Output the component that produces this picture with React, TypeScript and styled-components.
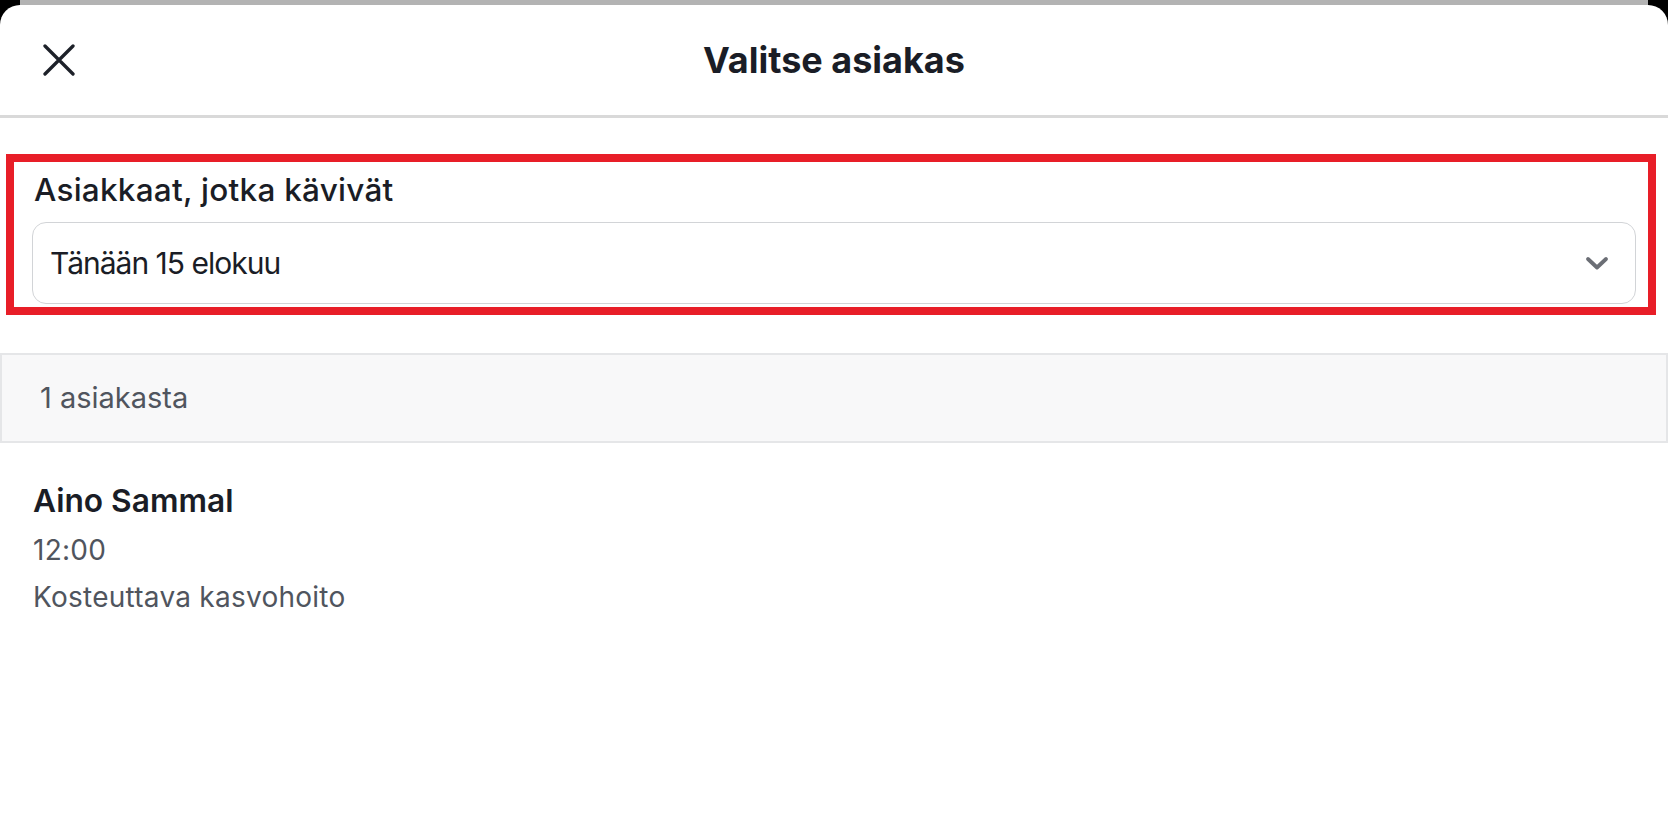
import React from "react";
import styled, { createGlobalStyle } from "styled-components";

const GlobalStyle = createGlobalStyle`
  html, body {
    margin: 0;
    padding: 0;
    background: #000;
  }
  body {
    font-family: Inter, "Noto Sans", "Liberation Sans", sans-serif;
    color: #1a1d26;
    -webkit-font-smoothing: antialiased;
  }
  * { box-sizing: border-box; }
`;

const Screen = styled.div`
  min-height: 823px;
  background: #000;
  display: flex;
  flex-direction: column;
`;

const UnderlyingPage = styled.div`
  height: 4.5px;
  margin: 0 20px;
  background: #b3b3b3;
`;

const Sheet = styled.div`
  flex: 1;
  background: #fff;
  border-radius: 20px 20px 0 0;
  display: flex;
  flex-direction: column;
`;

const Header = styled.header`
  height: 113.5px;
  border-bottom: 3px solid #d9d9d9;
  display: grid;
  grid-template-columns: 1fr auto 1fr;
  align-items: center;
`;

const CloseButton = styled.button`
  justify-self: start;
  margin-left: 40px;
  width: 38px;
  height: 38px;
  padding: 0;
  border: 0;
  background: transparent;
  display: flex;
  align-items: center;
  justify-content: center;
  color: #1d2129;
  cursor: pointer;
`;

const Title = styled.h1`
  margin: 0;
  font-size: 36px;
  line-height: 44px;
  font-weight: 700;
  color: #1a1d26;
`;

const FilterSection = styled.section`
  margin: 36px 12px 0 6px;
  border: 8px solid #e81e28;
  padding: 9px 12px 2.5px 18px;
  display: flex;
  flex-direction: column;
`;

const FieldLabel = styled.label`
  font-size: 31.5px;
  line-height: 38px;
  font-weight: 500;
  letter-spacing: 0.25px;
  color: #1a1d26;
  margin-left: 2px;
  margin-bottom: 13px;
`;

const Select = styled.div`
  height: 82px;
  border: 1.5px solid #d2d4d7;
  border-radius: 14px;
  padding: 0 26px 0 17px;
  display: flex;
  align-items: center;
  justify-content: space-between;
  background: #fff;
`;

const SelectValue = styled.span`
  font-size: 30px;
  line-height: 38px;
  font-weight: 400;
  letter-spacing: -1px;
  color: #1a1d26;
`;

const CountBar = styled.div`
  margin-top: 38.5px;
  height: 89.5px;
  border: 2.7px solid #e5e6e8;
  background: #f8f8f9;
  display: flex;
  align-items: center;
  padding-left: 38px;
`;

const CountText = styled.span`
  font-size: 29px;
  line-height: 36px;
  font-weight: 400;
  color: #50555e;
`;

const CustomerItem = styled.div`
  padding: 38.5px 33px 0;
  display: flex;
  flex-direction: column;
`;

const CustomerName = styled.div`
  font-size: 31.7px;
  line-height: 40px;
  font-weight: 600;
  color: #1a1d26;
`;

const CustomerMeta = styled.div<{ $gap: number }>`
  margin-top: ${(p) => p.$gap}px;
  font-size: 28px;
  line-height: 40px;
  font-weight: 400;
  letter-spacing: 0.25px;
  color: #50555e;
`;

const CloseIcon = () => (
  <svg width="32" height="32" viewBox="0 0 32 32" fill="none">
    <path
      d="M2 2 L30 30 M30 2 L2 30"
      stroke="currentColor"
      strokeWidth="3.3"
      strokeLinecap="round"
    />
  </svg>
);

const ChevronDown = () => (
  <svg width="24" height="15" viewBox="0 0 24 15" fill="none">
    <path
      d="M3 3 L12 11.5 L21 3"
      stroke="#6b6e75"
      strokeWidth="3.8"
      strokeLinecap="round"
      strokeLinejoin="round"
    />
  </svg>
);

export default function App() {
  return (
    <>
      <GlobalStyle />
      <Screen>
        <UnderlyingPage />
        <Sheet>
          <Header>
            <CloseButton aria-label="Sulje">
              <CloseIcon />
            </CloseButton>
            <Title>Valitse asiakas</Title>
            <div />
          </Header>

          <FilterSection>
            <FieldLabel>Asiakkaat, jotka kävivät</FieldLabel>
            <Select>
              <SelectValue>Tänään 15 elokuu</SelectValue>
              <ChevronDown />
            </Select>
          </FilterSection>

          <CountBar>
            <CountText>1 asiakasta</CountText>
          </CountBar>

          <CustomerItem>
            <CustomerName>Aino Sammal</CustomerName>
            <CustomerMeta $gap={9}>12:00</CustomerMeta>
            <CustomerMeta $gap={6.5}>Kosteuttava kasvohoito</CustomerMeta>
          </CustomerItem>
        </Sheet>
      </Screen>
    </>
  );
}
